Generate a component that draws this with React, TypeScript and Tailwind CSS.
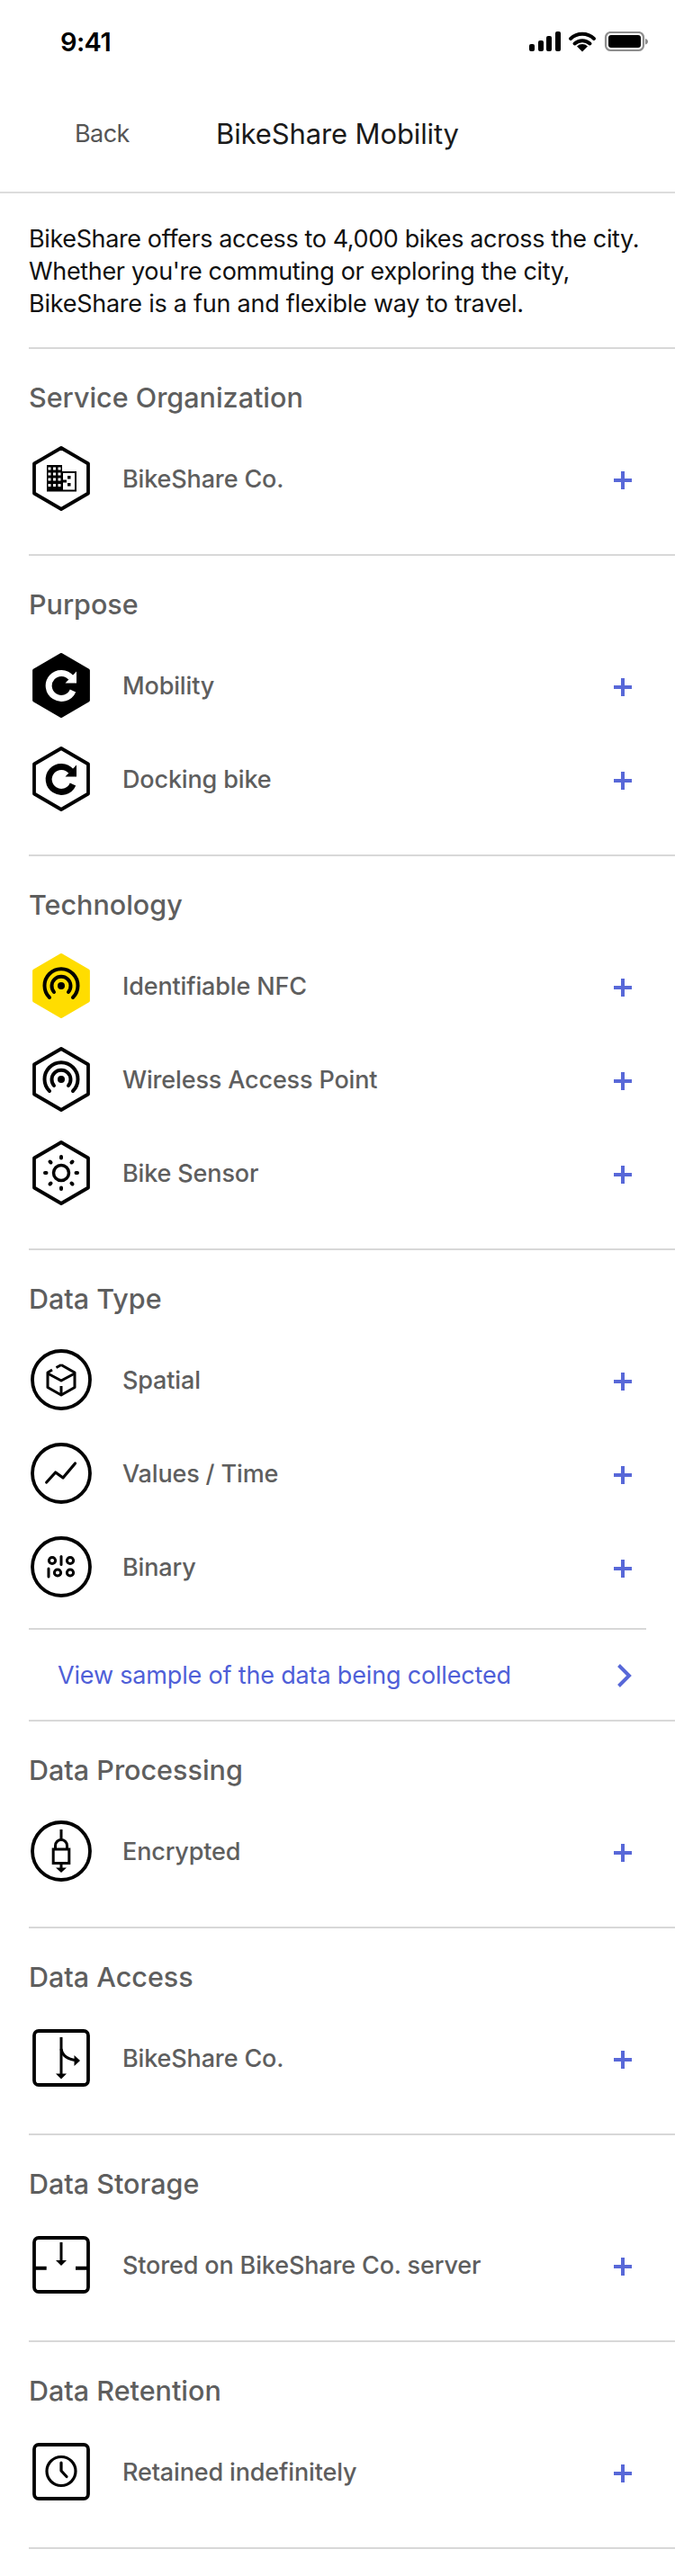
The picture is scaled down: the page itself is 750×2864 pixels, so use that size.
import React from "react";

const HEX = "M32 2 L62 19.5 V52.5 L32 70 L2 52.5 V19.5 Z";

function Hex({ fill = "none", stroke = "#000", children }: { fill?: string; stroke?: string; children?: React.ReactNode }) {
  return (
    <svg width="64" height="72" viewBox="0 0 64 72" fill="none">
      <path d={HEX} fill={fill} stroke={stroke} strokeWidth="3.8" strokeLinejoin="round" />
      {children}
    </svg>
  );
}

function Circle({ children }: { children?: React.ReactNode }) {
  return (
    <svg width="68" height="68" viewBox="0 0 68 68" fill="none">
      <circle cx="34" cy="34" r="32" stroke="#000" strokeWidth="3.8" />
      {children}
    </svg>
  );
}

function Square({ children }: { children?: React.ReactNode }) {
  return (
    <svg width="64" height="64" viewBox="0 0 64 64" fill="none">
      <rect x="2" y="2" width="60" height="60" rx="5" stroke="#000" strokeWidth="3.8" />
      {children}
    </svg>
  );
}

function Building() {
  const dots: React.ReactNode[] = [];
  [25, 31, 37, 43.5].forEach((y) =>
    [19, 24.5, 30].forEach((x) => dots.push(<rect key={`${x}-${y}`} x={x - 1.5} y={y - 1.5} width="3" height="3" fill="#fff" />))
  );
  return (
    <g>
      <path d="M16 21 H33 V28 H49 V50.5 H16 Z" fill="#000" />
      <rect x="34" y="30" width="13" height="18.5" fill="#fff" />
      {dots}
      <rect x="39" y="33" width="3.5" height="3.5" fill="#000" />
      <rect x="39" y="41" width="3.5" height="3.5" fill="#000" />
      <rect x="34" y="37.5" width="4" height="3" fill="#000" />
    </g>
  );
}

function Cycle({ color }: { color: string }) {
  return (
    <g>
      <path d="M43 27.5 A14 14 0 1 0 45 42" stroke={color} strokeWidth="7" fill="none" />
      <path d="M49 20.5 V33.5 H36.5 Z" fill={color} />
    </g>
  );
}

function Waves() {
  return (
    <g stroke="#000" strokeWidth="4" strokeLinecap="round">
      <path d="M19 49 A18.5 18.5 0 1 1 45 49" />
      <path d="M24 43 A10.5 10.5 0 1 1 40 43" />
      <circle cx="32" cy="36" r="4" fill="#000" stroke="none" />
    </g>
  );
}

function Sun() {
  return (
    <g stroke="#000" strokeWidth="4" strokeLinecap="round">
      <circle cx="32" cy="36" r="8.5" strokeWidth="3.5" />
      <path d="M32 18 V19.5 M32 52.5 V54 M14 36 H15.5 M48.5 36 H50 M19.5 23.5 L20.5 24.5 M43.5 47.5 L44.5 48.5 M44.5 23.5 L43.5 24.5 M20.5 47.5 L19.5 48.5" />
    </g>
  );
}

const Cube = () => (
  <g stroke="#000" strokeWidth="3" strokeLinejoin="round">
    <path d="M34 17.5 L49 26 V42.5 L34 51 L19 42.5 V26 L24 23 M28.5 20.5 L34 17.5" />
    <path d="M19 27 L34 35 L49 27" />
    <path d="M34 41 V50" />
  </g>
);

const Trend = () => (
  <path d="M17.7 44 L27.7 33 L36 39 L49.5 23" stroke="#000" strokeWidth="3.2" strokeLinecap="round" strokeLinejoin="round" />
);

const Binary = () => (
  <g stroke="#000" strokeWidth="3">
    <circle cx="24" cy="27" r="3.6" />
    <path d="M34 22.5 V31.5" strokeLinecap="round" />
    <circle cx="44" cy="27" r="3.6" />
    <path d="M20 36 V45" strokeLinecap="round" />
    <circle cx="30" cy="40.5" r="3.6" />
    <circle cx="44" cy="40.5" r="3.6" />
  </g>
);

const Lock = () => (
  <g stroke="#000" strokeWidth="3">
    <path d="M34 10 V21" />
    <path d="M27.5 32 V28 A6.5 6.5 0 0 1 40.5 28 V32" />
    <rect x="25.2" y="32" width="17.6" height="15.5" />
    <path d="M34 47 V54" />
    <path d="M28 52.5 H40 L34 58 Z" fill="#000" stroke="none" />
  </g>
);

const Fork = () => (
  <g stroke="#000" strokeWidth="3">
    <path d="M32 9 V50" />
    <path d="M32 22 C33 29 38 33 47 34.5" />
    <path d="M46.5 29 L53 35 L46.5 41 Z" fill="#000" stroke="none" />
    <path d="M26 49.5 H38 L32 55.5 Z" fill="#000" stroke="none" />
  </g>
);

const Store = () => (
  <g stroke="#000" strokeWidth="4">
    <path d="M32 7 V28" strokeWidth="3" />
    <path d="M26 27 H38 L32 33 Z" fill="#000" stroke="none" />
    <path d="M3 35.7 H15.7 M48 35.7 H61" />
  </g>
);

const Clock = () => (
  <g stroke="#000" strokeWidth="3.2">
    <circle cx="32" cy="31.5" r="16" />
    <path d="M32 22 V31 L38 37.5" strokeLinecap="round" strokeLinejoin="round" />
  </g>
);

function Plus() {
  return (
    <svg width="20" height="20" viewBox="0 0 20 20" className="mt-1 shrink-0">
      <path d="M10 0 V20 M0 10 H20" stroke="#5868d8" strokeWidth="4" />
    </svg>
  );
}

function Row({ icon, label }: { icon: React.ReactNode; label: string }) {
  return (
    <div className="flex h-[104px] items-center pr-[48px]">
      <div className="ml-[2px] mr-[34px] flex w-[68px] shrink-0 items-center justify-center">{icon}</div>
      <span className="mt-[3px] flex-1 text-[27px] font-medium tracking-[-0.15px] text-[#5e5e5e]">{label}</span>
      <Plus />
    </div>
  );
}

function Section({ title, rows, pb = "pb-[32px]" }: { title: string; rows: { icon: React.ReactNode; label: string }[]; pb?: string }) {
  return (
    <section className={`ml-8 border-t-2 border-[#d8d8d8] pt-[35px] ${pb}`}>
      <h2 className="h-[38px] text-[30.5px] leading-[38px] font-medium text-[#5e5e5e]">{title}</h2>
      <div className="mt-[19px]">
        {rows.map((r, i) => (
          <Row key={i} icon={r.icon} label={r.label} />
        ))}
      </div>
    </section>
  );
}

export default function App() {
  return (
    <div className="h-[2864px] w-[750px] overflow-hidden bg-white font-['Inter','Liberation_Sans',sans-serif]">
      <div className="flex h-[110px] items-start justify-between pt-[29px] pr-[30px] pl-[67px]">
        <span className="text-[29px] leading-[36px] font-semibold tracking-[-0.6px] text-black">9:41</span>
        <svg width="132" height="24" viewBox="0 0 132 24" className="mt-[6px]" fill="none">
          <rect x="0" y="14" width="6" height="8" rx="2" fill="#000" />
          <rect x="10" y="10" width="6" height="12" rx="2" fill="#000" />
          <rect x="19" y="5" width="6" height="17" rx="2" fill="#000" />
          <rect x="29" y="0" width="6" height="22" rx="2" fill="#000" />
          <path d="M46 8 A19 19 0 0 1 72 8" stroke="#000" strokeWidth="4" strokeLinecap="round" />
          <path d="M50.5 13.5 A12.5 12.5 0 0 1 67.5 13.5" stroke="#000" strokeWidth="4" strokeLinecap="round" />
          <path d="M59 22.5 L53 16.5 A8.5 8.5 0 0 1 65 16.5 Z" fill="#000" />
          <rect x="85" y="1" width="42" height="20" rx="5.5" stroke="#8e8e8e" strokeWidth="2.2" />
          <rect x="88" y="4" width="36" height="14" rx="3" fill="#000" />
          <path d="M129 8 V14.5 C131 14 132 12.5 132 11.25 C132 10 131 8.5 129 8 Z" fill="#8e8e8e" />
        </svg>
      </div>
      <header className="grid h-[105px] grid-cols-[1fr_auto_1fr] items-center border-b-2 border-[#dcdcdc] pb-[24px]">
        <span className="pl-[83px] text-[27px] tracking-[-0.6px] text-[#555]">Back</span>
        <h1 className="text-[31px] font-normal tracking-[-0.12px] text-[#1a1a1a]">BikeShare Mobility</h1>
        <span />
      </header>
      <p className="px-8 pt-[33px] pb-[30px] text-[27px] leading-[36px] text-[#111]">
        <span className="block tracking-[-0.38px]">BikeShare offers access to 4,000 bikes across the city.</span>
        <span className="block tracking-[-0.33px]">Whether you're commuting or exploring the city,</span>
        <span className="block tracking-[-0.25px]">BikeShare is a fun and flexible way to travel.</span>
      </p>
      <Section title="Service Organization" rows={[{ icon: <Hex><Building /></Hex>, label: "BikeShare Co." }]} />
      <Section
        title="Purpose"
        rows={[
          { icon: <Hex fill="#000"><Cycle color="#fff" /></Hex>, label: "Mobility" },
          { icon: <Hex><Cycle color="#000" /></Hex>, label: "Docking bike" },
        ]}
      />
      <Section
        title="Technology"
        rows={[
          { icon: <Hex fill="#ffdd00" stroke="#ffdd00"><Waves /></Hex>, label: "Identifiable NFC" },
          { icon: <Hex><Waves /></Hex>, label: "Wireless Access Point" },
          { icon: <Hex><Sun /></Hex>, label: "Bike Sensor" },
        ]}
      />
      <Section
        title="Data Type"
        pb="pb-[16px]"
        rows={[
          { icon: <Circle><Cube /></Circle>, label: "Spatial" },
          { icon: <Circle><Trend /></Circle>, label: "Values / Time" },
          { icon: <Circle><Binary /></Circle>, label: "Binary" },
        ]}
      />
      <div className="ml-8 mr-8 border-t-2 border-[#d8d8d8]" />
      <a className="flex h-[100px] items-center justify-between pt-[2px] pr-[46px] pl-16 text-[27px] tracking-[-0.17px] text-[#4f5fd8]">
        <span>View sample of the data being collected</span>
        <svg width="20" height="28" viewBox="0 0 20 28" fill="none">
          <path d="M3.5 2.5 L15 14 L3.5 25.5" stroke="#5868d8" strokeWidth="4" />
        </svg>
      </a>
      <Section title="Data Processing" rows={[{ icon: <Circle><Lock /></Circle>, label: "Encrypted" }]} />
      <Section title="Data Access" rows={[{ icon: <Square><Fork /></Square>, label: "BikeShare Co." }]} />
      <Section title="Data Storage" rows={[{ icon: <Square><Store /></Square>, label: "Stored on BikeShare Co. server" }]} />
      <Section title="Data Retention" rows={[{ icon: <Square><Clock /></Square>, label: "Retained indefinitely" }]} />
      <div className="ml-8 border-t-2 border-[#d8d8d8]" />
    </div>
  );
}
